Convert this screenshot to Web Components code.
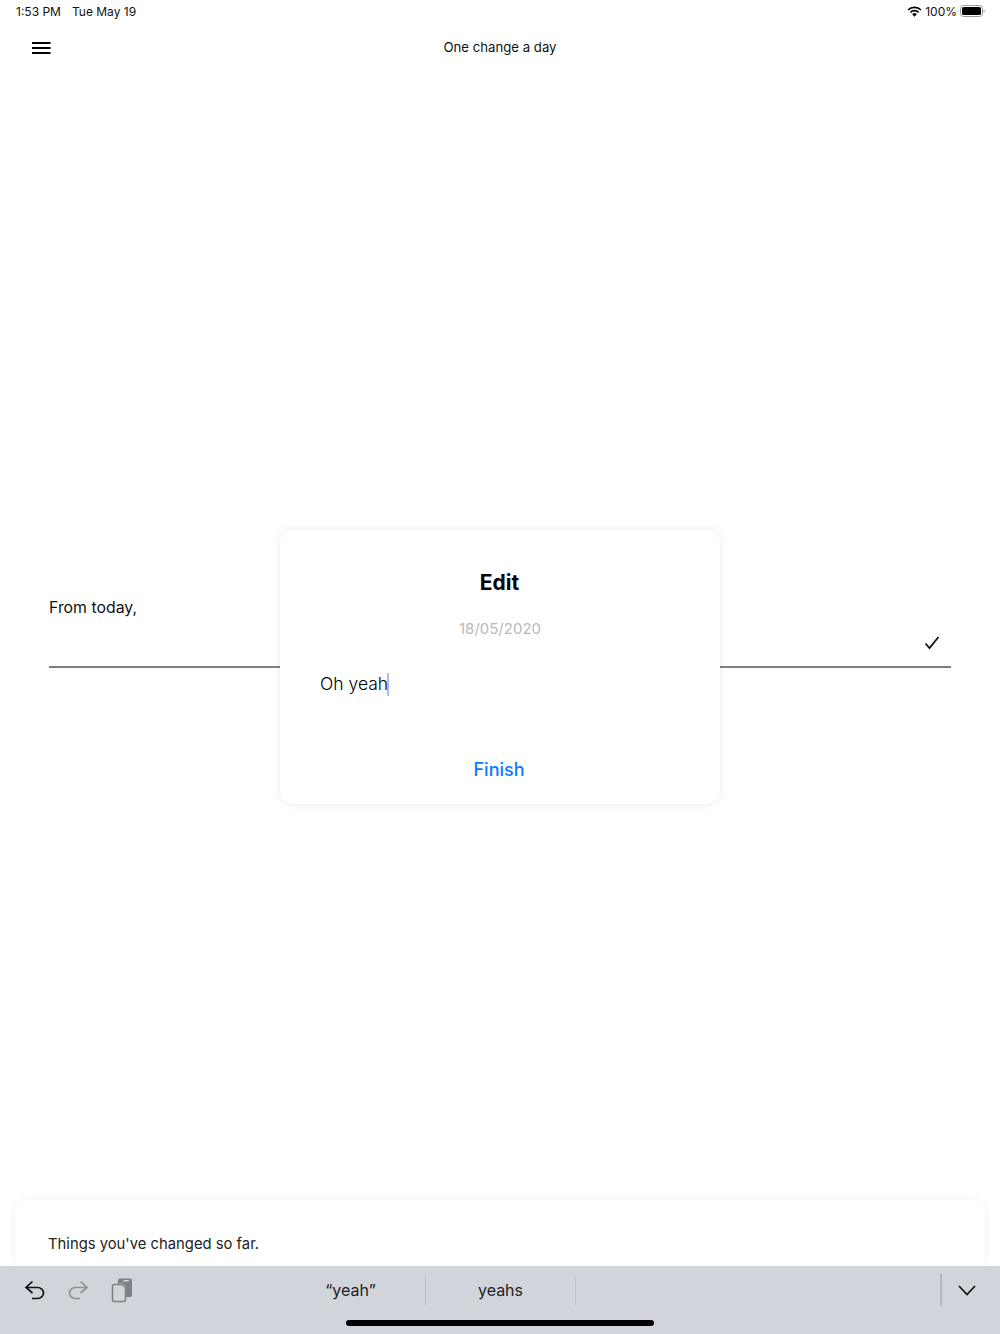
<!DOCTYPE html>
<html>
<head>
<meta charset="utf-8">
<title>One change a day</title>
<style>
  html, body { margin: 0; height: 100%; background: white; }
  body { font-family: Inter, "Liberation Sans", sans-serif; overflow: hidden; }
</style>
</head>
<body>
<change-app>
  <status-bar slot="status"></status-bar>
  <nav-bar slot="nav">One change a day</nav-bar>
  <today-entry slot="entry">From today,</today-entry>
  <history-card slot="history">Things you've changed so far.</history-card>
  <edit-dialog slot="dialog" date="18/05/2020" value="Oh yeah"></edit-dialog>
  <keyboard-bar slot="keyboard"></keyboard-bar>
</change-app>

<script>
class ChangeApp extends HTMLElement {
  connectedCallback() {
    this.attachShadow({ mode: 'open' });
    this.shadowRoot.innerHTML = `
      <style>
        :host {
          display: flex;
          flex-direction: column;
          position: relative;
          width: 1000px;
          height: 1334px;
          overflow: hidden;
          background: white;
        }
        .main {
          flex: 1;
          min-height: 0;
          display: flex;
          flex-direction: column;
          justify-content: space-between;
          overflow: hidden;
        }
        .dialog {
          position: absolute;
          left: 280px;
          top: 530px;
        }
      </style>
      <slot name="status"></slot>
      <slot name="nav"></slot>
      <div class="main">
        <slot name="entry"></slot>
        <slot name="history"></slot>
      </div>
      <slot name="keyboard"></slot>
      <div class="dialog"><slot name="dialog"></slot></div>
    `;
  }
}

class StatusBar extends HTMLElement {
  connectedCallback() {
    this.attachShadow({ mode: 'open' });
    this.shadowRoot.innerHTML = `
      <style>
        :host {
          display: flex;
          justify-content: space-between;
          align-items: center;
          height: 24px;
          box-sizing: border-box;
          padding: 0 15px 2px 16px;
          font-size: 12px;
          color: #111;
        }
        .left { display: flex; gap: 11px; }
        .right { display: flex; align-items: center; gap: 3px; }
        svg { display: block; }
      </style>
      <div class="left"><span>1:53 PM</span><span>Tue May 19</span></div>
      <div class="right">
        <svg width="15" height="11" viewBox="0 0 15 11">
          <path d="M1 4 A9.2 9.2 0 0 1 14 4" fill="none" stroke="#000" stroke-width="1.7"/>
          <path d="M3.4 6.3 A5.8 5.8 0 0 1 11.6 6.3" fill="none" stroke="#000" stroke-width="1.7"/>
          <path d="M5.2 8.3 A3.2 3.2 0 0 1 9.8 8.3 L7.5 10.8 Z" fill="#000"/>
        </svg>
        <span>100%</span>
        <svg width="25" height="12" viewBox="0 0 25 12">
          <rect x="0.5" y="0.5" width="22" height="11" rx="3" fill="none" stroke="#999"/>
          <rect x="2" y="2" width="19" height="8" rx="1.6" fill="#000"/>
          <path d="M23.6 4.2 a2 2 0 0 1 0 3.6 Z" fill="#999"/>
        </svg>
      </div>
    `;
  }
}

class NavBar extends HTMLElement {
  connectedCallback() {
    this.attachShadow({ mode: 'open' });
    this.shadowRoot.innerHTML = `
      <style>
        :host {
          display: flex;
          align-items: center;
          justify-content: center;
          position: relative;
          height: 48px;
          box-sizing: border-box;
          padding-bottom: 2px;
          font-size: 13.2px;
          color: #111;
        }
        svg { position: absolute; left: 32px; top: 18px; }
      </style>
      <svg width="19" height="12" viewBox="0 0 19 12">
        <path d="M0 1h18.5M0 6h18.5M0 11h18.5" stroke="#000" stroke-width="2"/>
      </svg>
      <slot></slot>
    `;
  }
}

class TodayEntry extends HTMLElement {
  connectedCallback() {
    this.attachShadow({ mode: 'open' });
    this.shadowRoot.innerHTML = `
      <style>
        :host {
          display: block;
          margin: 526px 49px 0;
          font-size: 15.85px;
          color: #111;
        }
        .label { line-height: 20px; }
        .field {
          display: flex;
          justify-content: flex-end;
          align-items: center;
          height: 48px;
          padding-right: 11px;
          border-bottom: 2px solid #7f7f7f;
          box-sizing: content-box;
        }
        svg { display: block; margin-top: 2px; }
      </style>
      <div class="label"><slot></slot></div>
      <div class="field">
        <svg width="16" height="14" viewBox="0 0 16 14">
          <path d="M1.5 7.5 L5.5 12 L14.5 1" fill="none" stroke="#111" stroke-width="1.8"/>
        </svg>
      </div>
    `;
  }
}

class HistoryCard extends HTMLElement {
  connectedCallback() {
    this.attachShadow({ mode: 'open' });
    this.shadowRoot.innerHTML = `
      <style>
        :host {
          display: block;
          height: 66px;
          margin: 0 15px;
          padding: 34px 33px 0;
          box-sizing: border-box;
          background: white;
          border-radius: 14px 14px 0 0;
          box-shadow: 0 0 8px rgba(0, 0, 0, 0.06);
          font-size: 14.8px;
          line-height: 20px;
          color: #222;
        }
      </style>
      <slot></slot>
    `;
  }
}

class EditDialog extends HTMLElement {
  connectedCallback() {
    this.attachShadow({ mode: 'open' });
    this.shadowRoot.innerHTML = `
      <style>
        :host {
          display: flex;
          flex-direction: column;
          align-items: center;
          width: 440px;
          height: 274px;
          box-sizing: border-box;
          padding-top: 40px;
          background: white;
          border-radius: 14px;
          box-shadow: 0 0 10px rgba(0, 0, 0, 0.09);
        }
        .title { font-size: 21px; line-height: 26px; font-weight: 700; color: #000; margin-left: -1px; }
        .date { margin-top: 23px; font-size: 15px; line-height: 20px; color: #b9b9b9; }
        .input {
          align-self: stretch;
          margin: 33px 0 0 40px;
          font-size: 17.5px;
          font-weight: 300;
          line-height: 24px;
          color: #000;
          display: flex;
          align-items: center;
        }
        .caret { width: 2px; height: 23px; background: #a9b9f2; margin-left: -1px; }
        .finish { margin-top: 62px; font-size: 18px; line-height: 24px; font-weight: 500; color: #0a7aff; margin-left: -2px; }
      </style>
      <div class="title">Edit</div>
      <div class="date">${this.getAttribute('date')}</div>
      <div class="input"><span>${this.getAttribute('value')}</span><span class="caret"></span></div>
      <div class="finish">Finish</div>
    `;
  }
}

class KeyboardBar extends HTMLElement {
  connectedCallback() {
    this.attachShadow({ mode: 'open' });
    this.shadowRoot.innerHTML = `
      <style>
        :host {
          display: block;
          position: relative;
          height: 68px;
          background: #d1d4da;
          color: #222;
        }
        .row {
          display: flex;
          align-items: center;
          height: 48px;
          box-sizing: border-box;
        }
        .tools { display: flex; align-items: center; gap: 21px; width: 276px; padding-left: 24px; box-sizing: border-box; }
        svg { display: block; flex: none; }
        .suggestion {
          width: 150px;
          height: 29px;
          display: flex;
          align-items: center;
          justify-content: center;
          font-size: 16px;
          border-right: 1px solid #bfc2c8;
          box-sizing: border-box;
        }
        .spacer { flex: 1; }
        .divider { width: 2px; height: 32px; background: #b5b8be; margin-right: 16px; }
        .close { margin-right: 24px; }
        .home {
          width: 308px;
          height: 6px;
          margin: 6px auto 0;
          background: #000;
          border-radius: 3px;
        }
      </style>
      <div class="row">
        <div class="tools">
          <svg width="22" height="22" viewBox="0 0 22 22">
            <path d="M8.5 2.5 L2 8.5 L8.5 14 M2 8.5 H13.5 A6 5.5 0 0 1 13.5 19.5 H8" fill="none" stroke="#111" stroke-width="1.7"/>
          </svg>
          <svg width="22" height="22" viewBox="0 0 22 22">
            <path d="M13.5 2.5 L20 8.5 L13.5 14 M20 8.5 H8.5 A6 5.5 0 0 0 8.5 19.5 H13" fill="none" stroke="#8e9094" stroke-width="1.7"/>
          </svg>
          <svg width="22" height="26" viewBox="0 0 22 26" style="margin-left: 1px">
            <path d="M7 3.5 A2 2 0 0 1 9 1.5 H19 A2 2 0 0 1 21 3.5 V18 A2 2 0 0 1 19 20 H15 V9.5 L12 6.5 H7 Z" fill="#7e8084"/>
            <rect x="12" y="3" width="6" height="1.6" rx="0.8" fill="#d1d4da"/>
            <path d="M3 7.5 H11.5 L14.5 10.5 V23 A1.5 1.5 0 0 1 13 24.5 H3 A1.5 1.5 0 0 1 1.5 23 V9 A1.5 1.5 0 0 1 3 7.5 Z" fill="none" stroke="#7e8084" stroke-width="1.5"/>
          </svg>
        </div>
        <div class="suggestion">“yeah”</div>
        <div class="suggestion">yeahs</div>
        <div class="spacer"></div>
        <div class="divider"></div>
        <svg class="close" width="18" height="11" viewBox="0 0 18 11">
          <path d="M1 1 L9 9.5 L17 1" fill="none" stroke="#111" stroke-width="1.7"/>
        </svg>
      </div>
      <div class="home"></div>
    `;
  }
}

customElements.define('change-app', ChangeApp);
customElements.define('status-bar', StatusBar);
customElements.define('nav-bar', NavBar);
customElements.define('today-entry', TodayEntry);
customElements.define('history-card', HistoryCard);
customElements.define('edit-dialog', EditDialog);
customElements.define('keyboard-bar', KeyboardBar);
</script>
</body>
</html>
